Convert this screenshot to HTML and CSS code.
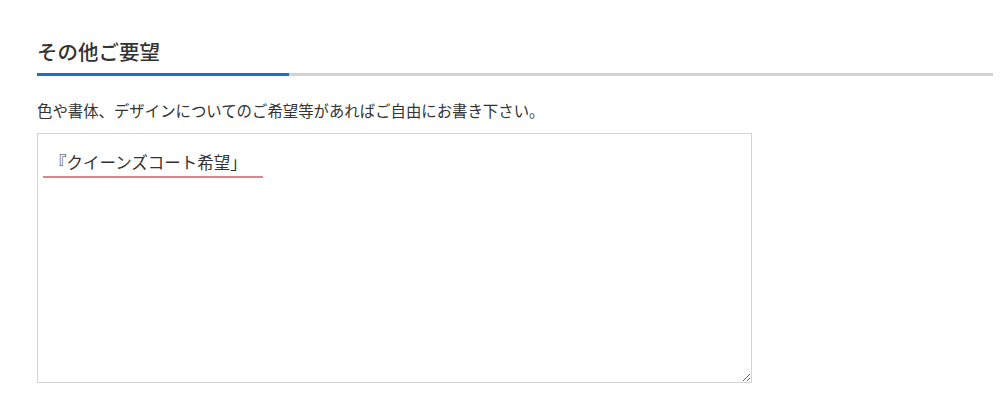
FILE: index.html
```html
<!DOCTYPE html>
<html lang="ja">
<head>
<meta charset="utf-8">
<title>その他ご要望</title>
<link rel="stylesheet" href="styles.css">
</head>
<body>
<section class="section">
  <h2 class="section-title">その他ご要望</h2>
  <p class="section-desc">色や書体、デザインについてのご希望等があればご自由にお書き下さい。</p>
  <div class="field">
    <textarea class="field-input" spellcheck="false">『クイーンズコート希望」</textarea>
    <span class="field-mark"></span>
  </div>
</section>
</body>
</html>
```
FILE: styles.css
```css
html, body {
  margin: 0;
  padding: 0;
  background: #ffffff;
}
body {
  font-family: "Noto Sans CJK JP", "Noto Sans", sans-serif;
  color: #333333;
}
.section {
  width: 956px;
  padding: 37px 0 0 37px;
}
.section-title {
  margin: 0;
  font-size: 20.5px;
  font-weight: 500;
  line-height: 28px;
  color: #333333;
  padding-bottom: 8px;
  border-bottom: 3px solid #d2d2d2;
  position: relative;
}
.section-title::after {
  content: "";
  position: absolute;
  left: 0;
  bottom: -3px;
  width: 252px;
  height: 3px;
  background: #1773be;
}
.section-desc {
  margin: 23px 0 0;
  font-size: 15.4px;
  line-height: 22px;
  color: #333333;
}
.field {
  position: relative;
  width: 715px;
  margin-top: 12px;
}
.field-input {
  display: block;
  box-sizing: border-box;
  width: 715px;
  height: 250px;
  margin: 0;
  border: 1px solid #d4d4d4;
  border-radius: 0;
  padding: 16px 12px;
  font-family: "Noto Sans CJK JP", "Noto Sans", sans-serif;
  font-size: 16.5px;
  line-height: 24px;
  color: #333333;
  resize: both;
  outline: none;
}
.field-mark {
  position: absolute;
  left: 6px;
  top: 43px;
  width: 220px;
  height: 2px;
  background: #d9868e;
}
```
